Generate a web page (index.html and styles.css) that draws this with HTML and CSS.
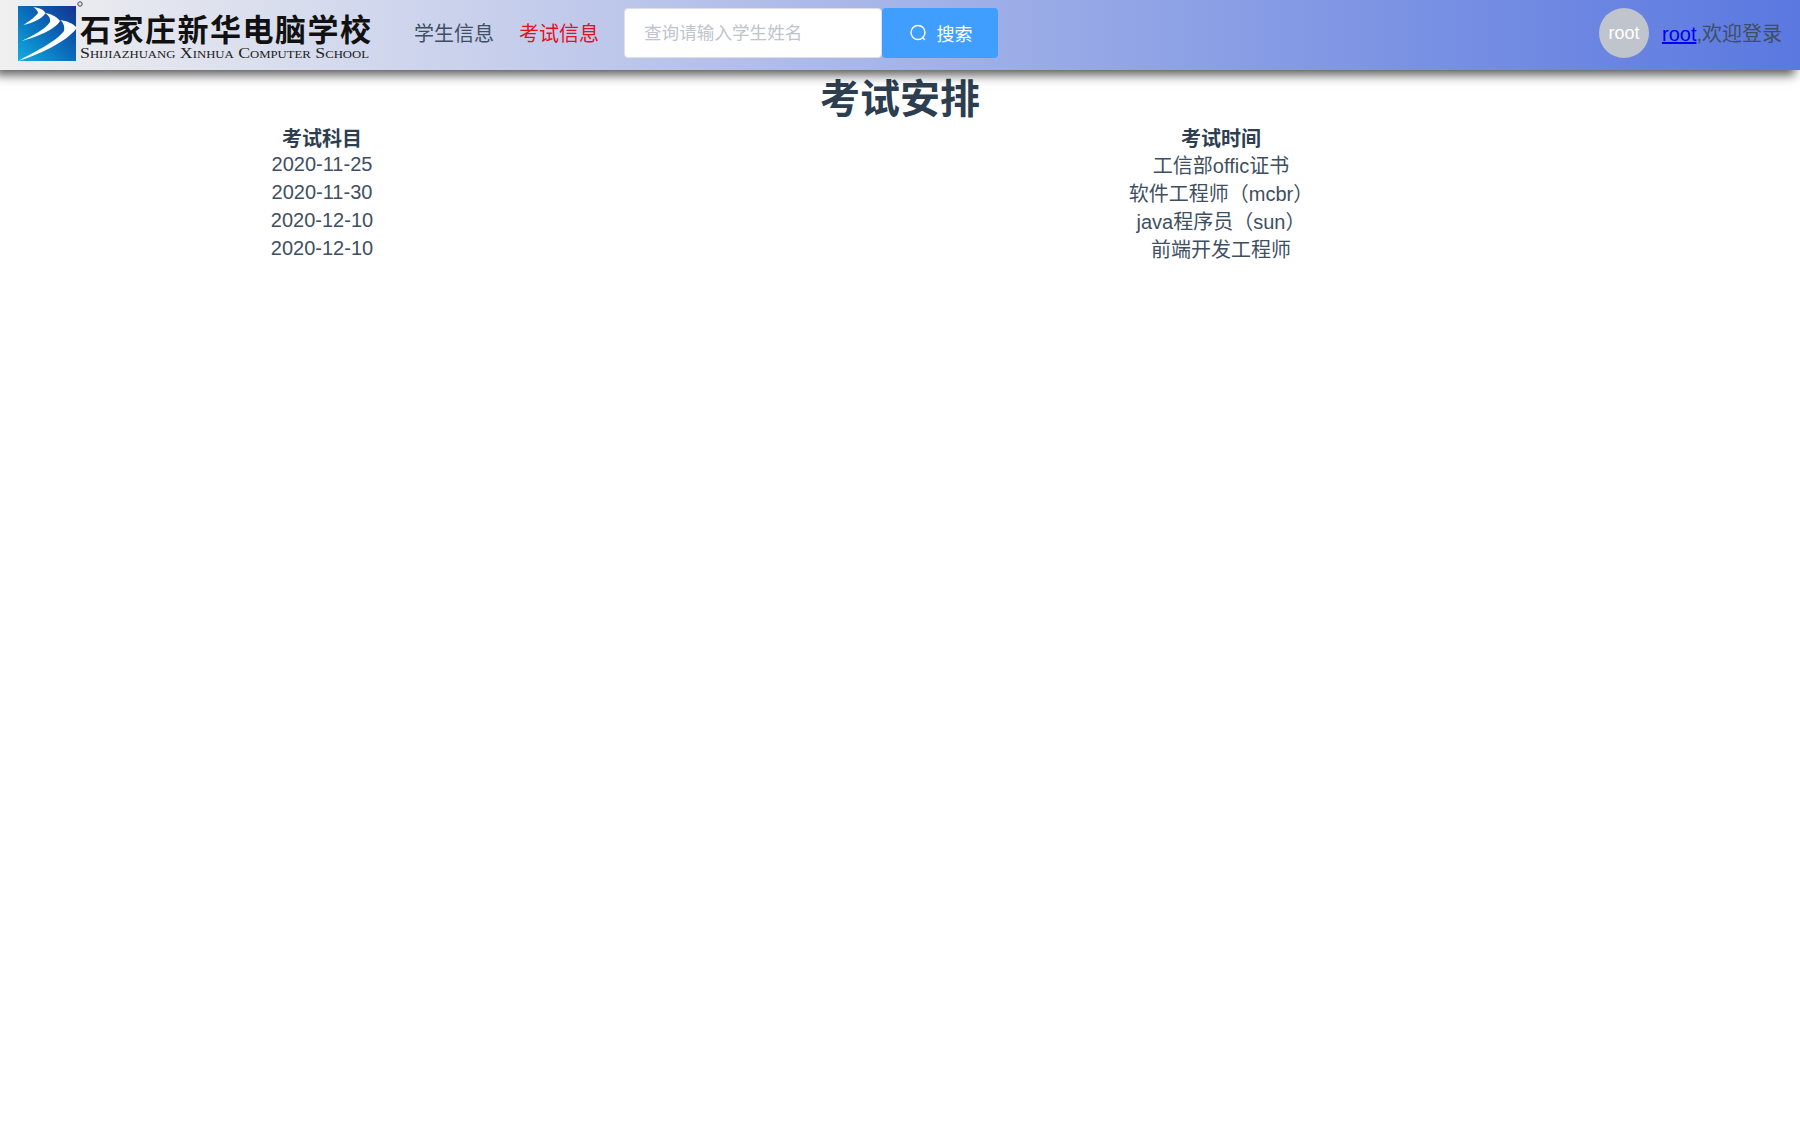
FILE: index.html
```html
<!DOCTYPE html>
<html lang="zh-CN">
<head>
<meta charset="utf-8">
<title>考试安排</title>
<link rel="stylesheet" href="styles.css">
</head>
<body>
<header class="topbar">
  <svg class="logo" viewBox="0 0 360 62" width="360" height="62" aria-label="石家庄新华电脑学校">
    <defs>
      <linearGradient id="lg" x1="0" y1="1" x2="1" y2="0">
        <stop offset="0" stop-color="#12aee0"/>
        <stop offset="0.5" stop-color="#0a6dbb"/>
        <stop offset="1" stop-color="#14318f"/>
      </linearGradient>
    </defs>
    <rect x="0" y="6" width="58" height="55" fill="url(#lg)"/>
    <path d="M15.3 7.3C22 8 26 10 27.5 13C24 19 14 23 5.3 25C12 21 18 16 20 13C20 11 18 9 15.3 7.3Z" fill="#fff"/>
    <path d="M27 13C34 14 39 17 42 21C37 30 18 37 3.7 41C14 36 28 29 32 22C33 18 30 15 27 13Z" fill="#fff"/>
    <path d="M42 20C49 21 54 23 58 27V29C48 42 20 55 0.3 61C14 53 38 42 46 31C47 26 45 22 42 20Z" fill="#fff"/>
    <circle cx="62" cy="4" r="2.2" fill="none" stroke="#444" stroke-width="1"/>
    <text class="logo-cn" x="62" y="41" textLength="291" lengthAdjust="spacing">石家庄新华电脑学校</text>
    <text class="logo-en" x="62" y="58" textLength="289" lengthAdjust="spacingAndGlyphs">Shijiazhuang Xinhua Computer School</text>
  </svg>
  <nav class="nav">
    <a class="nav-item">学生信息</a>
    <a class="nav-item nav-active">考试信息</a>
  </nav>
  <form class="search">
    <input class="search-input" type="text" placeholder="查询请输入学生姓名">
    <button class="search-btn" type="button">
      <svg class="search-icon" viewBox="0 0 18 18" width="18" height="18"><circle cx="9" cy="8.5" r="7" fill="none" stroke="#fff" stroke-width="1.4"/><path d="M13.6 13.4l1.9 2" stroke="#fff" stroke-width="1.4" stroke-linecap="round"/></svg>
      <span>搜索</span>
    </button>
  </form>
  <div class="user">
    <span class="avatar">root</span>
    <span class="welcome"><a class="user-link" href="#">root</a>,欢迎登录</span>
  </div>
</header>
<main>
  <h1 class="title">考试安排</h1>
  <div class="schedule">
    <ul class="col col-date">
      <li class="head">考试科目</li>
      <li>2020-11-25</li>
      <li>2020-11-30</li>
      <li>2020-12-10</li>
      <li>2020-12-10</li>
    </ul>
    <ul class="col col-name">
      <li class="head">考试时间</li>
      <li>工信部offic证书</li>
      <li>软件工程师（mcbr）</li>
      <li>java程序员（sun）</li>
      <li>前端开发工程师</li>
    </ul>
  </div>
</main>
</body>
</html>
```
FILE: styles.css
```css
* { box-sizing: border-box; }
html, body { margin: 0; padding: 0; background: #fff; }
body {
  font-family: "Liberation Sans", "Noto Sans CJK SC", sans-serif;
  font-size: 20px;
  color: #2c3e50;
}
.topbar {
  height: 70px;
  display: flex;
  align-items: center;
  padding: 0 18px 4px;
  background: linear-gradient(to right, #f0f0f0, #5a78e0);
  box-shadow: -5px 5px 10px rgba(0, 0, 0, .65);
  position: relative;
}
.logo { flex: none; align-self: flex-start; margin-right: 36px; }
.logo-cn { font-family: "Noto Sans CJK SC", sans-serif; font-size: 31px; font-weight: 700; fill: #111; }
.logo-en { font-family: "Liberation Serif", serif; font-size: 14px; font-variant: small-caps; fill: #222; }
.nav { display: flex; gap: 25px; margin-top: 2px; margin-right: 25px; }
.nav-item { color: #3f4f62; line-height: 28px; }
.nav-active { color: #e4101f; }
.search { display: flex; }
.search-input {
  width: 258px;
  height: 50px;
  padding: 0 19px;
  border: 1px solid #dcdfe6;
  border-radius: 4px;
  background: #fff;
  font: inherit;
  font-size: 17.6px;
  outline: none;
}
.search-input::placeholder { color: #c0c4cc; opacity: 1; }
.search-btn {
  width: 116px;
  height: 50px;
  padding: 0 0 0 1px;
  border: 0;
  border-radius: 4px;
  background: #409eff;
  color: #fff;
  font: inherit;
  font-size: 18px;
  display: flex;
  align-items: center;
  justify-content: center;
  gap: 10px;
}
.user { margin-left: auto; display: flex; align-items: center; gap: 13px; }
.avatar {
  width: 50px;
  height: 50px;
  border-radius: 50%;
  background: #c0c4cc;
  color: #fff;
  font-size: 18px;
  display: flex;
  align-items: center;
  justify-content: center;
}
.welcome { color: #3f4f62; margin-bottom: 2px; }
.user-link { color: #0000ee; }
.title {
  margin: 0;
  height: 55px;
  font-size: 40px;
  line-height: 58px;
  text-align: center;
  font-weight: 700;
}
.schedule { display: grid; grid-template-columns: 644px 1154px; }
.col { list-style: none; margin: 0; padding: 0; text-align: center; color: #3f4f62; }
.col li { height: 28px; line-height: 28px; }
.col .head { font-weight: 700; height: 25px; color: #2c3e50; }
.col-name .head { height: 27px; }
```
